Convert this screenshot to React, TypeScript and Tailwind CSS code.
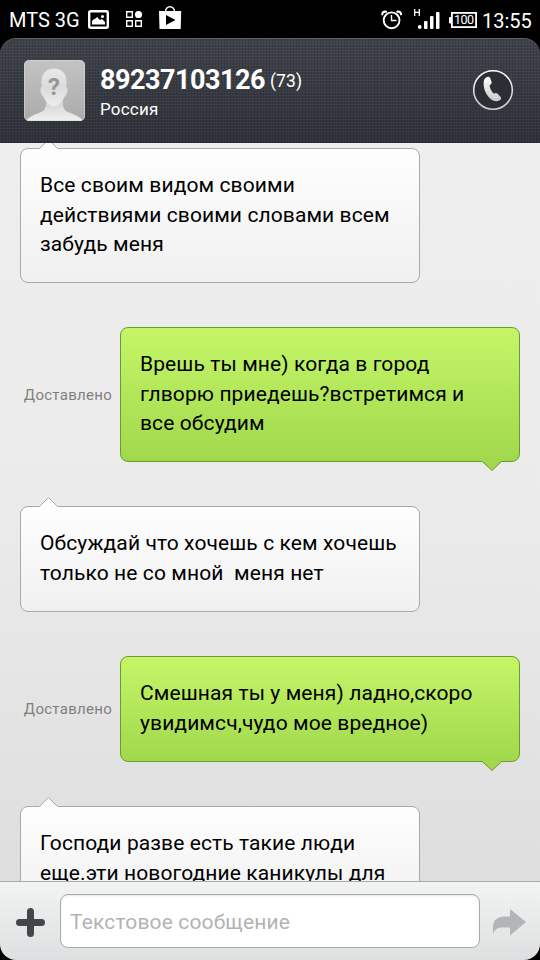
import clsx from 'clsx'

interface Message {
  id: number
  mine: boolean
  lines: string[]
}

const messages: Message[] = [
  { id: 1, mine: false, lines: ['Все своим видом своими', 'действиями своими словами всем', 'забудь меня'] },
  { id: 2, mine: true, lines: ['Врешь ты мне) когда в город', 'глворю приедешь?встретимся и', 'все обсудим'] },
  { id: 3, mine: false, lines: ['Обсуждай что хочешь с кем хочешь', 'только не со мной  меня нет'] },
  { id: 4, mine: true, lines: ['Смешная ты у меня) ладно,скоро', 'увидимсч,чудо мое вредное)'] },
  { id: 5, mine: false, lines: ['Господи разве есть такие люди', 'еще.эти новогодние каникулы для'] },
]

function StatusBar() {
  return (
    <div className="flex h-[38px] shrink-0 items-center bg-black pl-[9px] pr-[9px] text-[20px] leading-[38px] text-white">
      <span className="w-[79px] shrink-0 whitespace-nowrap pt-[2px]">MTS 3G</span>
      <svg className="shrink-0" width="100" height="38" viewBox="88 0 100 38">
        <rect x="89.2" y="11.2" width="18.6" height="16.6" rx="1.5" fill="none" stroke="#fff" strokeWidth="2.4" />
        <path d="M92 24.500V21l2-2h1l2-2 3 3 2-1 3 3v2.500z" fill="#fff" />
        <circle cx="102.500" cy="16.500" r="1.500" fill="#fff" />
        <path d="M126.700 11.700h5.600v5.600h-5.600zM126.700 20.700h5.600v5.600h-5.600zM135.700 20.700h5.600v5.600h-5.600z" fill="none" stroke="#fff" strokeWidth="1.400" />
        <circle cx="138.500" cy="14.500" r="3.600" fill="#fff" />
        <path d="M165.500 12c0-7 9-7 9 0" fill="none" stroke="#fff" strokeWidth="1.500" />
        <path d="M159 11h22.200l-.5 18h-21.200z" fill="#fff" />
        <path d="M166 15l9.500 5-9.500 5z" fill="#000" />
      </svg>
      <svg className="ml-auto shrink-0" width="102" height="38" viewBox="378 0 102 38">
        <g fill="none" stroke="#fff" strokeLinecap="round">
          <circle cx="391.600" cy="20.300" r="7.900" strokeWidth="1.900" />
          <path d="M391.500 15.500v5h4.500" strokeWidth="1.400" />
          <path d="M382.300 14.300c0-1.800 1.500-3 3.600-2.600M401 14.300c0-1.800-1.500-3-3.600-2.600" strokeWidth="2.200" />
        </g>
        <path d="M414.700 9v7M419.300 9v7M414.700 12.300h4.600" fill="none" stroke="#fff" strokeWidth="1.300" />
        <g fill="#fff">
          <circle cx="419.700" cy="27" r="1.900" />
          <rect x="424" y="21" width="3.500" height="8" rx="1" />
          <rect x="430" y="16" width="3.500" height="13" rx="1" />
          <rect x="436" y="12" width="3.500" height="17" rx="1" />
          <rect x="449" y="17" width="3" height="6.500" rx="1" />
        </g>
        <rect x="451.900" y="12.900" width="24.200" height="14.200" fill="none" stroke="#fff" strokeWidth="1.800" />
        <text x="464" y="24.400" textAnchor="middle" fill="#fff" fontSize="12.500" textLength="20">100</text>
      </svg>
      <span className="ml-[2px] w-[49px] shrink-0 whitespace-nowrap pt-[3px]">13:55</span>
    </div>
  )
}

function Avatar() {
  return (
    <svg className="-mt-px ml-6 shrink-0" width="61" height="61" viewBox="0 0 61 61">
      <defs>
        <linearGradient id="avatar-bg" x2="0" y2="1">
          <stop stopColor="#c3c3c3" />
          <stop offset="1" stopColor="#ababab" />
        </linearGradient>
        <linearGradient id="avatar-skin" x2="0" y2="1">
          <stop stopColor="#cfcfcf" />
          <stop offset="1" stopColor="#f0f0f0" />
        </linearGradient>
        <linearGradient id="avatar-face" x2="0" y2="1">
          <stop stopColor="#e9e9e9" />
          <stop offset=".5" stopColor="#dcdcdc" />
          <stop offset="1" stopColor="#ededed" />
        </linearGradient>
        <clipPath id="avatar-clip">
          <rect width="61" height="61" rx="5" />
        </clipPath>
      </defs>
      <g clipPath="url(#avatar-clip)">
        <rect width="61" height="61" fill="url(#avatar-bg)" />
        <path d="M2 61c3-5 11-7 16-9.500 3.500-2 4.500-5 4-13.500h17c-.5 8.500.5 11.500 4 13.500 5 2.500 13 4.500 16 9.500z" fill="url(#avatar-skin)" />
        <path d="M30 8.500c-8.500 0-12.500 6-12.500 13 0 2 .2 4 .4 5.500-2.700-.6-1.500 7.500 1.500 9.500 2 5.500 6.500 9.500 10.600 9.500s8.600-4 10.600-9.500c3-2 4.200-10.100 1.500-9.500.2-1.500.4-3.500.4-5.500 0-7-4-13-12.500-13z" fill="url(#avatar-face)" />
      </g>
      <rect x=".5" y=".5" width="60" height="60" rx="4.500" fill="none" stroke="#d8d8d8" strokeOpacity=".6" />
      <text x="30" y="35" textAnchor="middle" fontSize="24" fontWeight="700" fill="#979797">?</text>
    </svg>
  )
}

function Header() {
  return (
    <header className="flex h-[105px] shrink-0 items-center rounded-t-[16px] border-t border-[#5d5f66] bg-[linear-gradient(to_bottom,#3f424a,#2f3139)] text-white">
      <div className="-mt-px flex h-full w-full items-center rounded-t-[16px] bg-[repeating-linear-gradient(90deg,#0000_0_2px,#0000001c_2px_3px),repeating-linear-gradient(0deg,#0000_0_2px,#ffffff0b_2px_3px)]">
        <Avatar />
        <div className="ml-[15px] pt-[3px]">
          <div className="flex items-baseline whitespace-nowrap">
            <span className="w-[170px] text-[27px] leading-[32px] font-bold tracking-[-.48px]">89237103126</span>
            <span className="relative -top-[2px] text-[17.500px] tracking-[.1px]">(73)</span>
          </div>
          <div className="mt-px text-[17px] leading-[22px] tracking-[.2px]">Россия</div>
        </div>
        <svg className="-mt-[2px] mr-[26px] ml-auto" width="42" height="42" viewBox="0 0 42 42">
          <defs>
            <linearGradient id="phone" x2="0" y2="1">
              <stop stopColor="#fff" />
              <stop offset="1" stopColor="#c9c9c9" />
            </linearGradient>
          </defs>
          <circle cx="21" cy="21" r="19.300" fill="#2c2e35" stroke="url(#phone)" strokeWidth="1.500" />
          <path d="M14 8.500c2-1.300 3.600-.8 4.400 1l1.100 3.300c.5 1.600-.2 2.500-2 3.600.4 3.200 2 6 4.400 8.300 1.400-.9 2.600-1 3.700.1l3 3.200c1 1.300.4 2.800-1.300 3.600-3.600 1.600-7.500 0-10.700-3.700-3.500-4.200-5-8.600-5-13.500 0-2.800.8-4.800 2.400-5.900z" fill="url(#phone)" />
        </svg>
      </div>
    </header>
  )
}

function Bubble({ message }: { message: Message }) {
  const { mine, lines } = message
  return (
    <div className={clsx('flex shrink-0 items-center px-5', mine && 'justify-end')}>
      {mine && <span className="mr-[8px] text-[15px] leading-5 tracking-[.28px] text-[#808080]">Доставлено</span>}
      <div
        className={clsx(
          'relative w-[400px] shrink-0 rounded-[8px] border px-[19px] pt-[22px] text-[21px] leading-[29.500px] tracking-[.1px] whitespace-pre text-black',
          lines.length > 2 ? 'h-[135px]' : 'h-[106px]',
          mine ? 'border-[#6c9a31] bg-linear-to-b from-[#c5f668] to-[#a1d84c]' : 'border-[#a9a9a9] bg-linear-to-b from-[#fefefe] to-[#f0f0f0]',
        )}
      >
        {lines.map((line) => (
          <div key={line}>{line}</div>
        ))}
        {mine ? (
          <svg className="absolute right-[16px] -bottom-[11px]" width="22" height="12" viewBox="0 0 22 12">
            <path d="M1 0v2l10 8.500L20 2V0z" fill="#a1d84c" />
            <path d="M1 1.500h.5l9.500 9 9.500-9h.5" fill="none" stroke="#6c9a31" />
          </svg>
        ) : (
          <svg className="absolute -top-[11px] left-[17px]" width="22" height="12" viewBox="0 0 22 12">
            <path d="M1 12v-1.500l9.500-9 9.500 9V12z" fill="#fefefe" />
            <path d="M1 10.500h.5l9-9 9 9h.5" fill="none" stroke="#a9a9a9" />
          </svg>
        )}
      </div>
    </div>
  )
}

function Composer() {
  return (
    <footer className="flex h-[79px] shrink-0 items-center rounded-b-[16px] border-t border-[#a9a9a9] bg-linear-to-b from-[#f2f4f3] to-[#dedfe0]">
      <svg className="mt-[3px] ml-4 shrink-0" width="29" height="29" viewBox="0 0 29 29">
        <path d="M14.500 3.500v22M3.500 14.500h22" fill="none" stroke="#45464b" strokeWidth="7" strokeLinecap="round" />
      </svg>
      <div className="ml-[15px] flex h-[54px] w-[420px] shrink-0 items-center rounded-[8px] border border-[#a9a9a9] bg-white pt-[3px] pl-[9px] text-[21px] tracking-[.15px] text-[#b3b3b3] shadow-[inset_0_1px_2px_#0000001a]">
        Текстовое сообщение
      </div>
      <svg className="mt-[2px] ml-[12px] shrink-0" width="35" height="28" viewBox="0 0 35 28">
        <path d="M1 26V19C1 12 6 8.500 12 8.500h6V1l16 13L18 27.500V19.500h-8c-5 0-7 2-9 6.500z" fill="#b4b5b8" />
      </svg>
    </footer>
  )
}

export default function App() {
  return (
    <div className="flex h-[960px] w-[540px] flex-col overflow-hidden bg-black font-[Roboto,'Noto_Sans',sans-serif]">
      <StatusBar />
      <Header />
      <main className="flex min-h-0 flex-1 flex-col gap-11 overflow-hidden bg-linear-to-b from-[#eeeeee] via-[#ebebeb] to-[#dedede] pt-[5px]">
        {messages.map((message) => (
          <Bubble key={message.id} message={message} />
        ))}
      </main>
      <Composer />
    </div>
  )
}
